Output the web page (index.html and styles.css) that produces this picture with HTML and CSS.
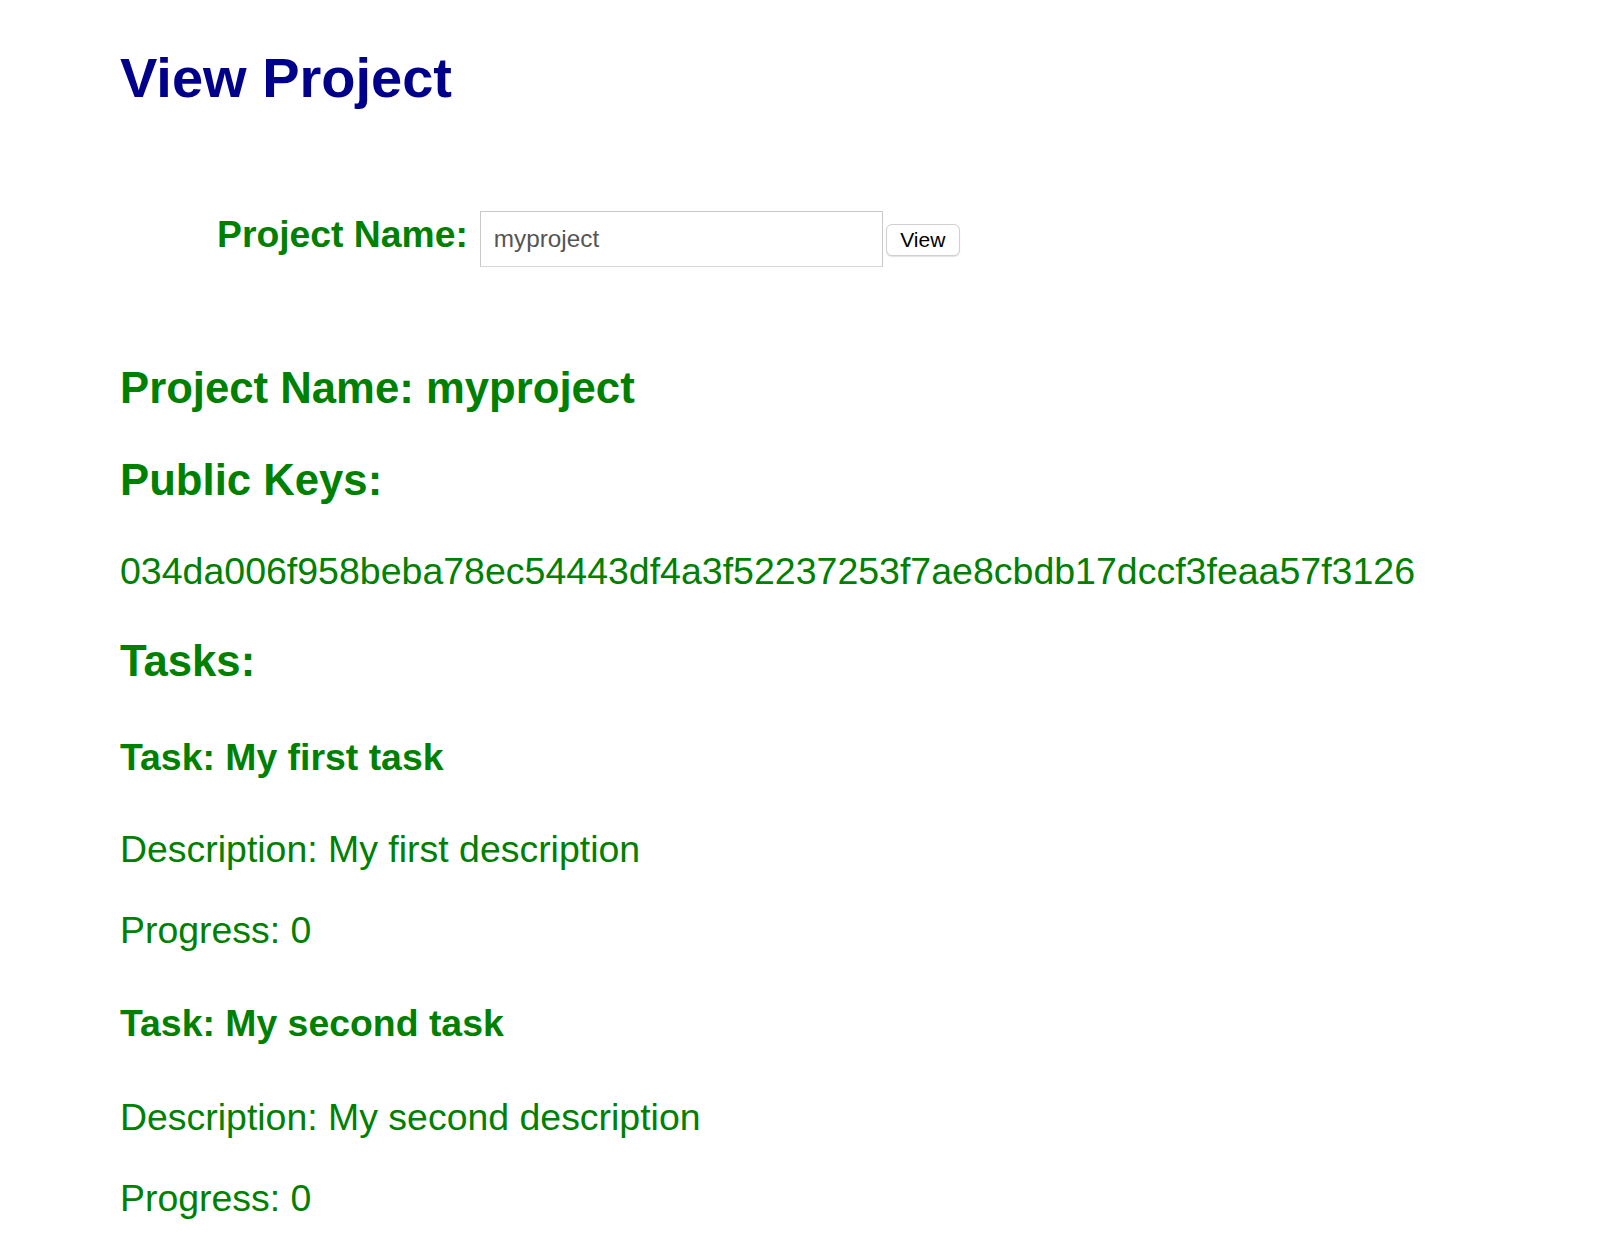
FILE: index.html
```html
<!DOCTYPE html>
<html lang="en">
<head>
<meta charset="utf-8">
<title>View Project</title>
<link rel="stylesheet" href="styles.css">
</head>
<body>
<div class="page">
  <h1 class="title">View Project</h1>
  <form class="search">
    <label class="search-label" for="pname">Project Name:</label>
    <input class="search-input" id="pname" type="text" value="myproject">
    <button class="search-btn" type="button">View</button>
  </form>
  <h2 class="heading heading-first">Project Name: myproject</h2>
  <h2 class="heading heading-keys">Public Keys:</h2>
  <p class="text key">034da006f958beba78ec54443df4a3f52237253f7ae8cbdb17dccf3feaa57f3126</p>
  <h2 class="heading heading-tasks">Tasks:</h2>
  <div class="task">
    <h3 class="task-title">Task: My first task</h3>
    <p class="text desc">Description: My first description</p>
    <p class="text progress">Progress: 0</p>
  </div>
  <div class="task">
    <h3 class="task-title">Task: My second task</h3>
    <p class="text desc">Description: My second description</p>
    <p class="text progress">Progress: 0</p>
  </div>
</div>
</body>
</html>
```
FILE: styles.css
```css
html, body {
  margin: 0;
  padding: 0;
  background: #ffffff;
}
body {
  font-family: "Liberation Sans", Arial, Helvetica, sans-serif;
  color: #008000;
}
.page {
  padding: 46px 0 0 120px;
}
.title {
  margin: 0;
  font-size: 56px;
  line-height: 64px;
  font-weight: bold;
  color: #00008b;
}
.search {
  display: flex;
  align-items: baseline;
  margin: 101px 0 0 97px;
}
.search-label {
  font-size: 37.3px;
  line-height: 44px;
  font-weight: bold;
  color: #008000;
  margin-right: 12px;
}
.search-input {
  box-sizing: border-box;
  width: 403px;
  height: 56px;
  margin: 0;
  padding: 0 10px 0 13px;
  border: 1px solid #c9c9c9;
  border-bottom-color: #d6d6d6;
  border-radius: 0;
  font-family: "Liberation Sans", Arial, Helvetica, sans-serif;
  font-size: 24.3px;
  color: #555555;
  background: #ffffff;
  outline: none;
}
.search-btn {
  box-sizing: border-box;
  width: 74px;
  height: 32px;
  margin: 0 0 0 3px;
  padding: 0;
  border: 1px solid #d0d0d0;
  border-radius: 6px;
  background: #ffffff;
  box-shadow: 0 1px 1px rgba(0, 0, 0, 0.12);
  font-family: "Liberation Sans", Arial, Helvetica, sans-serif;
  font-size: 21px;
  color: #000000;
}
.heading {
  margin: 0;
  font-size: 43.7px;
  line-height: 52px;
  font-weight: bold;
}
.heading-first {
  margin-top: 95px;
}
.heading-keys {
  margin-top: 40px;
}
.text {
  margin: 0;
  font-size: 37.45px;
  line-height: 44px;
}
.key {
  margin-top: 43px;
  font-size: 37.5px;
}
.heading-tasks {
  margin-top: 42px;
}
.task-title {
  margin: 48px 0 0;
  font-size: 37.4px;
  line-height: 44px;
  font-weight: bold;
}
.task + .task .task-title {
  margin-top: 49px;
}
.desc {
  margin-top: 48px;
}
.task + .task .desc {
  margin-top: 50px;
}
.progress {
  margin-top: 37px;
}
```
